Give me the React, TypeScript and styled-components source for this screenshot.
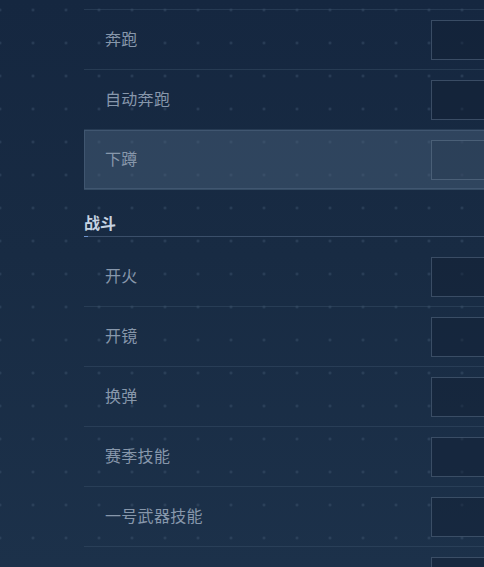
import styled, { createGlobalStyle } from 'styled-components';

const GlobalStyle = createGlobalStyle`
  html, body {
    margin: 0;
    padding: 0;
    overflow: hidden;
    background: #172840;
  }
  * {
    box-sizing: border-box;
  }
`;

type Binding = { label: string; active?: boolean };

const movement: Binding[] = [
    { label: '奔跑' },
    { label: '自动奔跑' },
    { label: '下蹲', active: true },
];

const combat: Binding[] = [
    { label: '开火' },
    { label: '开镜' },
    { label: '换弹' },
    { label: '赛季技能' },
    { label: '一号武器技能' },
    { label: '二号武器技能' },
];

const App = () => {
    return (
        <>
            <GlobalStyle />
            <Page>
                <Content>
                    <List $topBorder>
                        {movement.map((b) => (
                            <Row key={b.label} $active={b.active}>
                                <Label>{b.label}</Label>
                                <KeyBox $active={b.active} />
                            </Row>
                        ))}
                    </List>
                    <SectionHeader>
                        <SectionTitle>战斗</SectionTitle>
                    </SectionHeader>
                    <List>
                        {combat.map((b) => (
                            <Row key={b.label} $active={b.active}>
                                <Label>{b.label}</Label>
                                <KeyBox $active={b.active} />
                            </Row>
                        ))}
                    </List>
                </Content>
            </Page>
        </>
    );
};

export default App;

// Styled Components
const Page = styled.div`
  width: 484px;
  height: 567px;
  overflow: hidden;
  padding: 9px 0 0 84px;
  background-color: #172840;
  background-image:
    radial-gradient(circle, rgba(70, 92, 118, 0.5) 0.9px, transparent 1.6px),
    linear-gradient(180deg, #152740 0%, #182b43 45%, #1c314a 100%);
  background-size: 33px 33px, 100% 100%;
  background-position: -16.5px -6.5px, 0 0;
  font-family: "Noto Sans CJK SC", "Noto Sans", sans-serif;
`;

const Content = styled.div`
  width: 523px;
`;

const List = styled.div<{ $topBorder?: boolean }>`
  display: flex;
  flex-direction: column;
  border-top: ${(p) => (p.$topBorder ? '1px solid rgba(60, 82, 106, 0.45)' : 'none')};
`;

const Row = styled.div<{ $active?: boolean }>`
  display: flex;
  align-items: center;
  height: 60px;
  padding: 0 16px 0 21px;
  border-bottom: 1px solid rgba(60, 82, 106, 0.45);
  background: ${(p) => (p.$active ? 'rgba(72, 96, 122, 0.5)' : 'transparent')};
  box-shadow: ${(p) => (p.$active ? 'inset 0 0 0 1px rgba(110, 134, 160, 0.28)' : 'none')};
`;

const Label = styled.span`
  flex: 1;
  padding-bottom: 3px;
  font-size: 16px;
  line-height: 22px;
  color: #8797ab;
  letter-spacing: 0.3px;
`;

const KeyBox = styled.div<{ $active?: boolean }>`
  width: 160px;
  height: 40px;
  border: 1px solid ${(p) => (p.$active ? 'rgba(110, 132, 156, 0.45)' : 'rgba(84, 104, 128, 0.6)')};
  background: ${(p) => (p.$active ? 'rgba(40, 58, 80, 0.35)' : 'rgba(18, 32, 50, 0.45)')};
`;

const SectionHeader = styled.div`
  position: relative;
  margin-top: 21px;
  margin-bottom: 10px;
  padding-bottom: 1px;
  border-bottom: 1px solid rgba(74, 96, 122, 0.7);

  &::after {
    content: '';
    position: absolute;
    left: 0;
    bottom: -1px;
    width: 4px;
    height: 1px;
    background: #6e93cc;
  }
`;

const SectionTitle = styled.div`
  font-size: 16px;
  line-height: 24px;
  padding-bottom: 1px;
  margin-top: -1px;
  font-weight: 700;
  color: #c6d3e1;
`;
